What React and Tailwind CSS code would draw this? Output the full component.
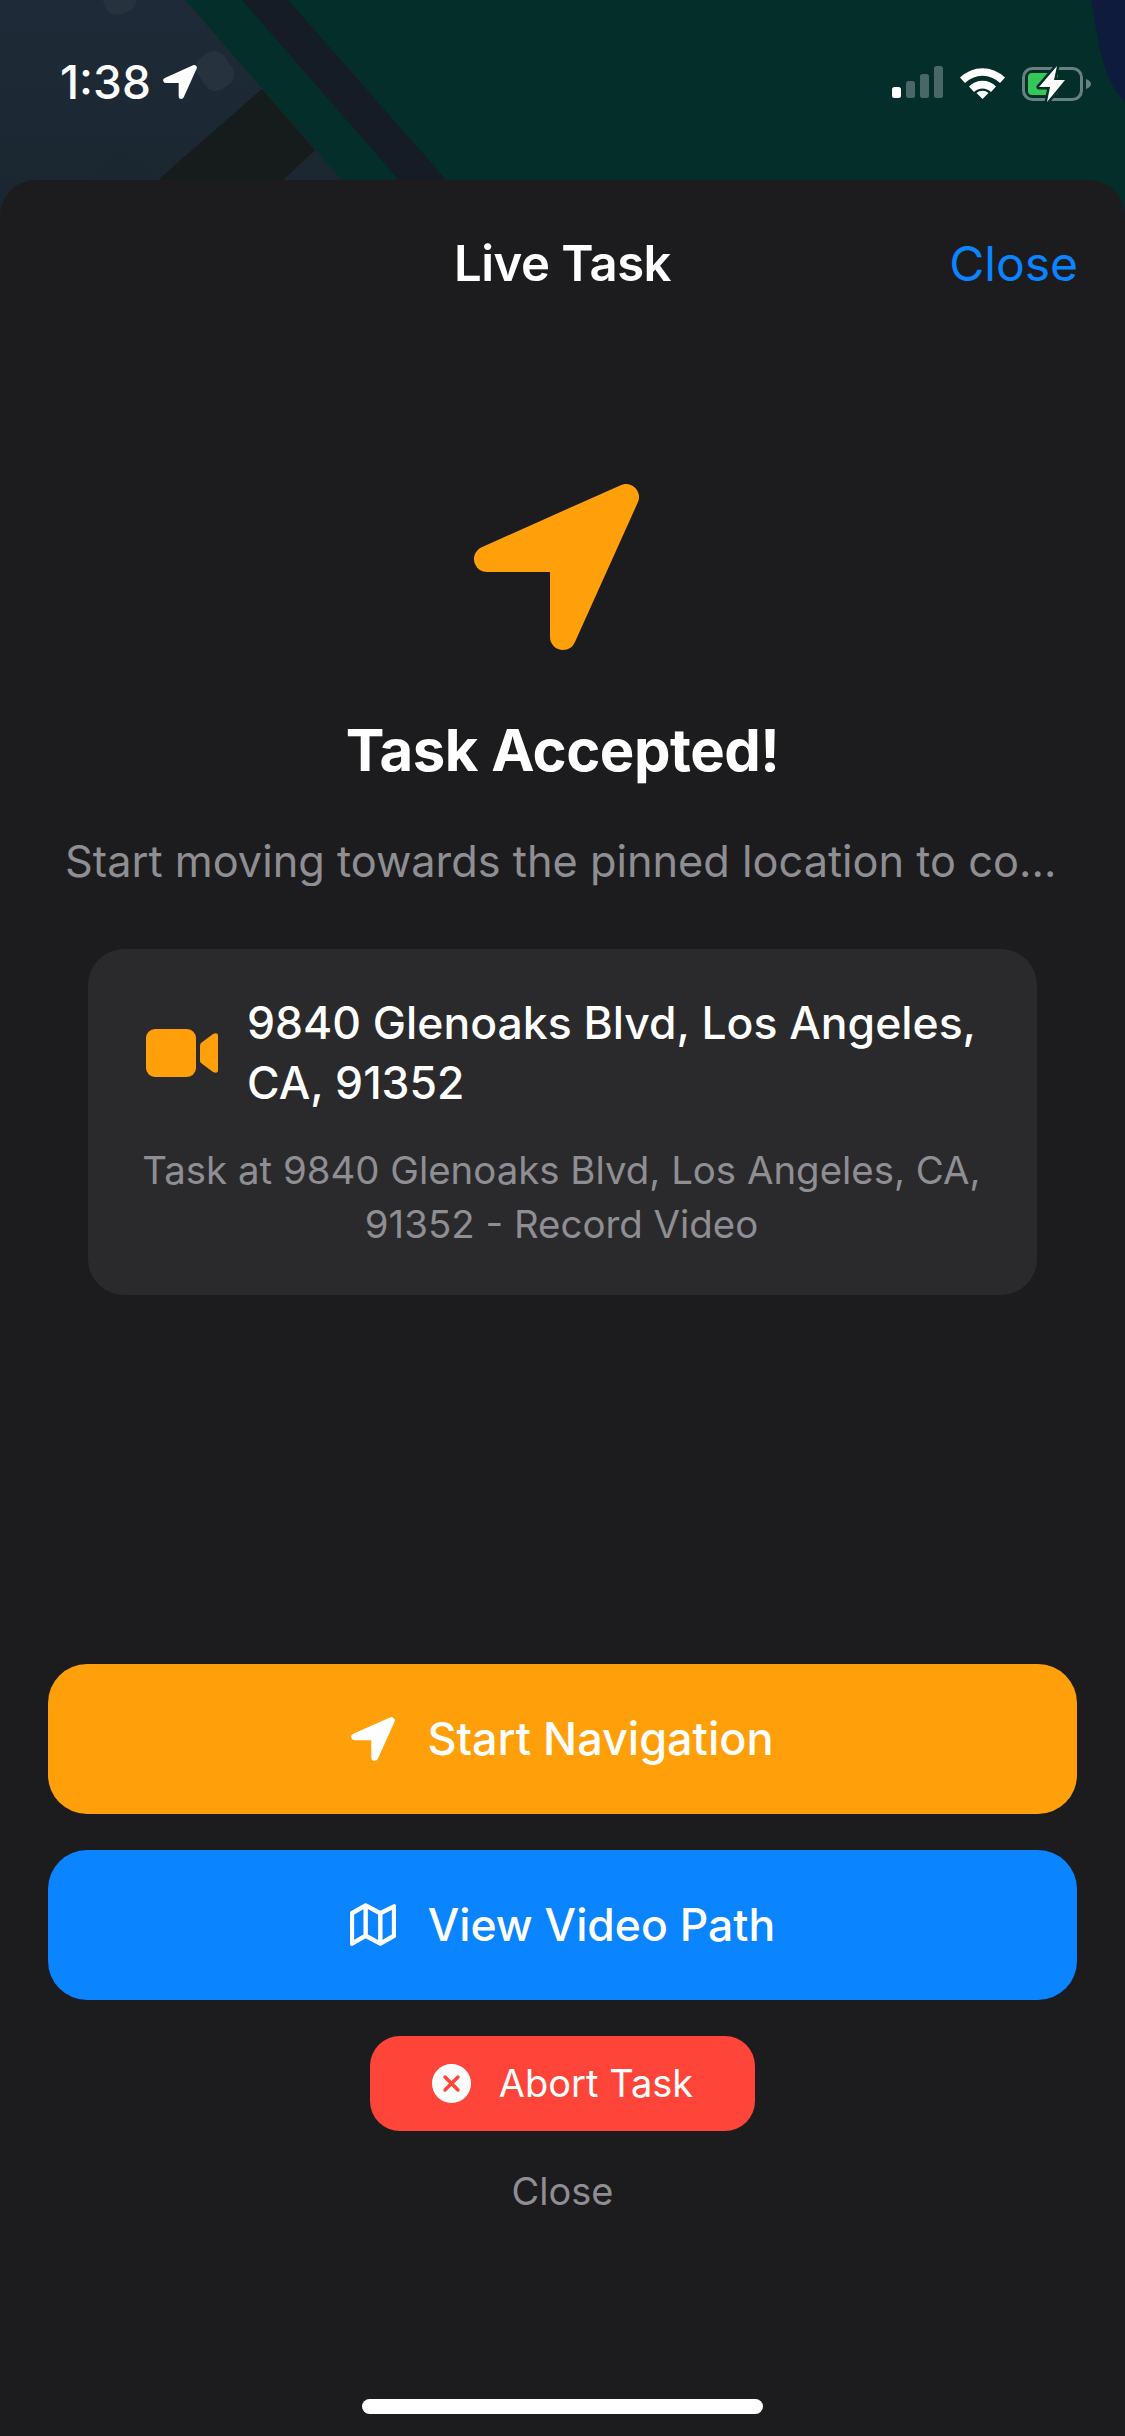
const NavArrow = ({ className, fill = "#ff9f0a" }) => (
  <svg viewBox="0 0 167 166" className={className}>
    <path
      d="M153 13L14 75H90V153Z"
      fill={fill}
      stroke={fill}
      strokeWidth="26"
      strokeLinejoin="round"
    />
  </svg>
);

const Wallpaper = () => (
  <svg
    viewBox="0 0 1125 240"
    className="absolute top-0 left-0 w-[1125px] h-[240px]"
  >
    <defs>
      <linearGradient id="leftBg" x1="0" y1="0" x2="0" y2="1">
        <stop offset="0" stopColor="#1f2a38" />
        <stop offset="1" stopColor="#19262e" />
      </linearGradient>
    </defs>
    <rect width="1125" height="240" fill="#032e2a" />
    <path d="M0 0H185L394 240H0Z" fill="url(#leftBg)" />
    <path d="M242 0H288L499 240H451Z" fill="#161c25" />
    <path d="M262 89L315 150L283 180H158Z" fill="#151c1b" />
    <path d="M161 180L120 150L90 180Z" fill="#1a2630" />
    <rect x="199" y="52" width="32" height="38" rx="12" fill="#26333f" transform="rotate(-35 215 71)" />
    <rect x="102" y="-24" width="32" height="38" rx="12" fill="#26333f" transform="rotate(-20 118 -5)" />
    <path d="M1091 0H1125V102Q1106 84 1098 40Z" fill="#0f1b3d" />
  </svg>
);

const SignalBars = () => (
  <svg viewBox="0 0 51 32" className="w-[51px] h-[32px]">
    <rect x="0" y="21" width="9" height="11" rx="2.5" fill="#fff" />
    <rect x="14" y="15" width="9" height="17" rx="2.5" fill="#fff" fillOpacity="0.28" />
    <rect x="28" y="8" width="9" height="24" rx="2.5" fill="#fff" fillOpacity="0.28" />
    <rect x="42" y="0" width="9" height="32" rx="2.5" fill="#fff" fillOpacity="0.28" />
  </svg>
);

const Wifi = () => (
  <svg viewBox="0 0 45 33" className="w-[45px] h-[33px]">
    <path d="M0 11.5A32 32 0 0 1 45 11.5L40 17A25 25 0 0 0 5 17Z" fill="#fff" />
    <path d="M9 20.5A19 19 0 0 1 36 20.5L31 26A12 12 0 0 0 14 26Z" fill="#fff" />
    <path d="M16.5 27A9 9 0 0 1 28.5 27L22.5 33Z" fill="#fff" />
  </svg>
);

const Battery = () => (
  <svg viewBox="0 0 69 36" className="w-[69px] h-[36px]">
    <rect x="1.5" y="2.5" width="58" height="31" rx="9" fill="none" stroke="#fff" strokeOpacity="0.4" strokeWidth="3" />
    <path d="M64 13Q69 15 69 18Q69 21 64 23Z" fill="#fff" fillOpacity="0.4" />
    <rect x="6" y="7" width="30" height="22" rx="4" fill="#34c759" />
    <path d="M35 0L17 21H28L25 36L43 14H32Z" fill="#032e2a" stroke="#032e2a" strokeWidth="5" strokeLinejoin="round" />
    <path d="M35 0L17 21H28L25 36L43 14H32Z" fill="#fff" />
  </svg>
);

const StatusBar = () => (
  <div className="relative h-[180px] flex justify-between pl-[60px] pr-[34px] pt-[65px]">
    <div className="flex items-start gap-[12px]">
      <span className="text-[46px] leading-[34px] font-medium text-white">
        1:38
      </span>
      <NavArrow className="w-[34px] h-[34px]" fill="#fff" />
    </div>
    <div className="flex items-start gap-[17px] mt-[1px]">
      <SignalBars />
      <Wifi />
      <Battery />
    </div>
  </div>
);

export default function App() {
  return (
    <div className="relative w-[1125px] h-[2436px] overflow-hidden bg-[#1c1c1e] font-['Inter',sans-serif]">
      <Wallpaper />
      <StatusBar />

      <div className="relative h-[2256px] rounded-t-[36px] bg-[#1c1c1e] flex flex-col items-center">
        {/* header */}
        <div className="w-full relative h-[168px] flex items-center justify-center">
          <span className="text-[49px] font-semibold text-white tracking-[-0.5px]">
            Live Task
          </span>
          <span className="absolute right-[47px] top-[56px] text-[48px] leading-[56px] text-[#0a84ff]">
            Close
          </span>
        </div>

        <NavArrow className="mt-[136px] mr-[12px] w-[167px] h-[166px]" />

        <h1 className="mt-[68px] text-[58px] leading-[64px] font-bold text-white tracking-[-0.5px]">
          Task Accepted!
        </h1>
        <p className="mt-[54px] w-[995px] text-[43.3px] leading-[50px] text-[#8e8e93] truncate text-center">
          Start moving towards the pinned location to complete the task
        </p>

        {/* address card */}
        <div className="mt-[63px] w-[949px] h-[346px] rounded-[36px] bg-[#2a2a2c] pl-[58px] pr-[40px] pt-[44px]">
          <div className="flex items-center gap-[29px]">
            <svg viewBox="0 0 72 48" className="w-[72px] h-[48px] shrink-0">
              <rect x="0" y="0" width="50" height="48" rx="9" fill="#ff9f0a" />
              <path d="M54 16.5Q54 15 55 14L67 5Q72 3 72 7V41Q72 45 67 43L55 34Q54 33 54 31.5Z" fill="#ff9f0a" />
            </svg>
            <div className="text-[44.5px] leading-[60px] font-[550] text-white">
              9840 Glenoaks Blvd, Los Angeles,
              <br />
              CA, 91352
            </div>
          </div>
          <p className="mt-[30px] -ml-[20px] text-[38.4px] leading-[54px] text-[#8e8e93] text-center">
            Task at 9840 Glenoaks Blvd, Los Angeles, CA,
            <br />
            91352 - Record Video
          </p>
        </div>

        {/* actions */}
        <button className="mt-[369px] w-[1029px] h-[150px] rounded-[39px] bg-[#ff9f0a] flex items-center justify-center gap-[32px] text-white text-[45px] font-medium">
          <NavArrow className="w-[44px] h-[44px]" fill="#fff" />
          Start Navigation
        </button>
        <button className="mt-[36px] w-[1029px] h-[150px] rounded-[39px] bg-[#0a84ff] flex items-center justify-center gap-[32px] text-white text-[44.5px] font-medium">
          <svg viewBox="0 0 47 44" className="w-[46px] h-[44px]">
            <path
              d="M2 10L16 2L31 10L45 3V33L31 41L16 33L2 41ZM16 2V33M31 10V41"
              fill="none"
              stroke="#fff"
              strokeWidth="4.5"
              strokeLinejoin="round"
            />
          </svg>
          View Video Path
        </button>
        <button className="mt-[36px] w-[385px] h-[95px] rounded-[30px] bg-[#ff453a] flex items-center justify-center gap-[28px] text-white text-[38px]">
          <svg viewBox="0 0 39 39" className="w-[39px] h-[39px]">
            <circle cx="19.5" cy="19.5" r="19.5" fill="#fff" />
            <path d="M13 13L26 26M26 13L13 26" stroke="#ff453a" strokeWidth="3.5" strokeLinecap="round" />
          </svg>
          Abort Task
        </button>
        <span className="mt-[36px] text-[38px] leading-[48px] text-[#8e8e93]">Close</span>

        {/* home indicator */}
        <div className="absolute bottom-[22px] w-[401px] h-[15px] rounded-full bg-white" />
      </div>
    </div>
  );
}
